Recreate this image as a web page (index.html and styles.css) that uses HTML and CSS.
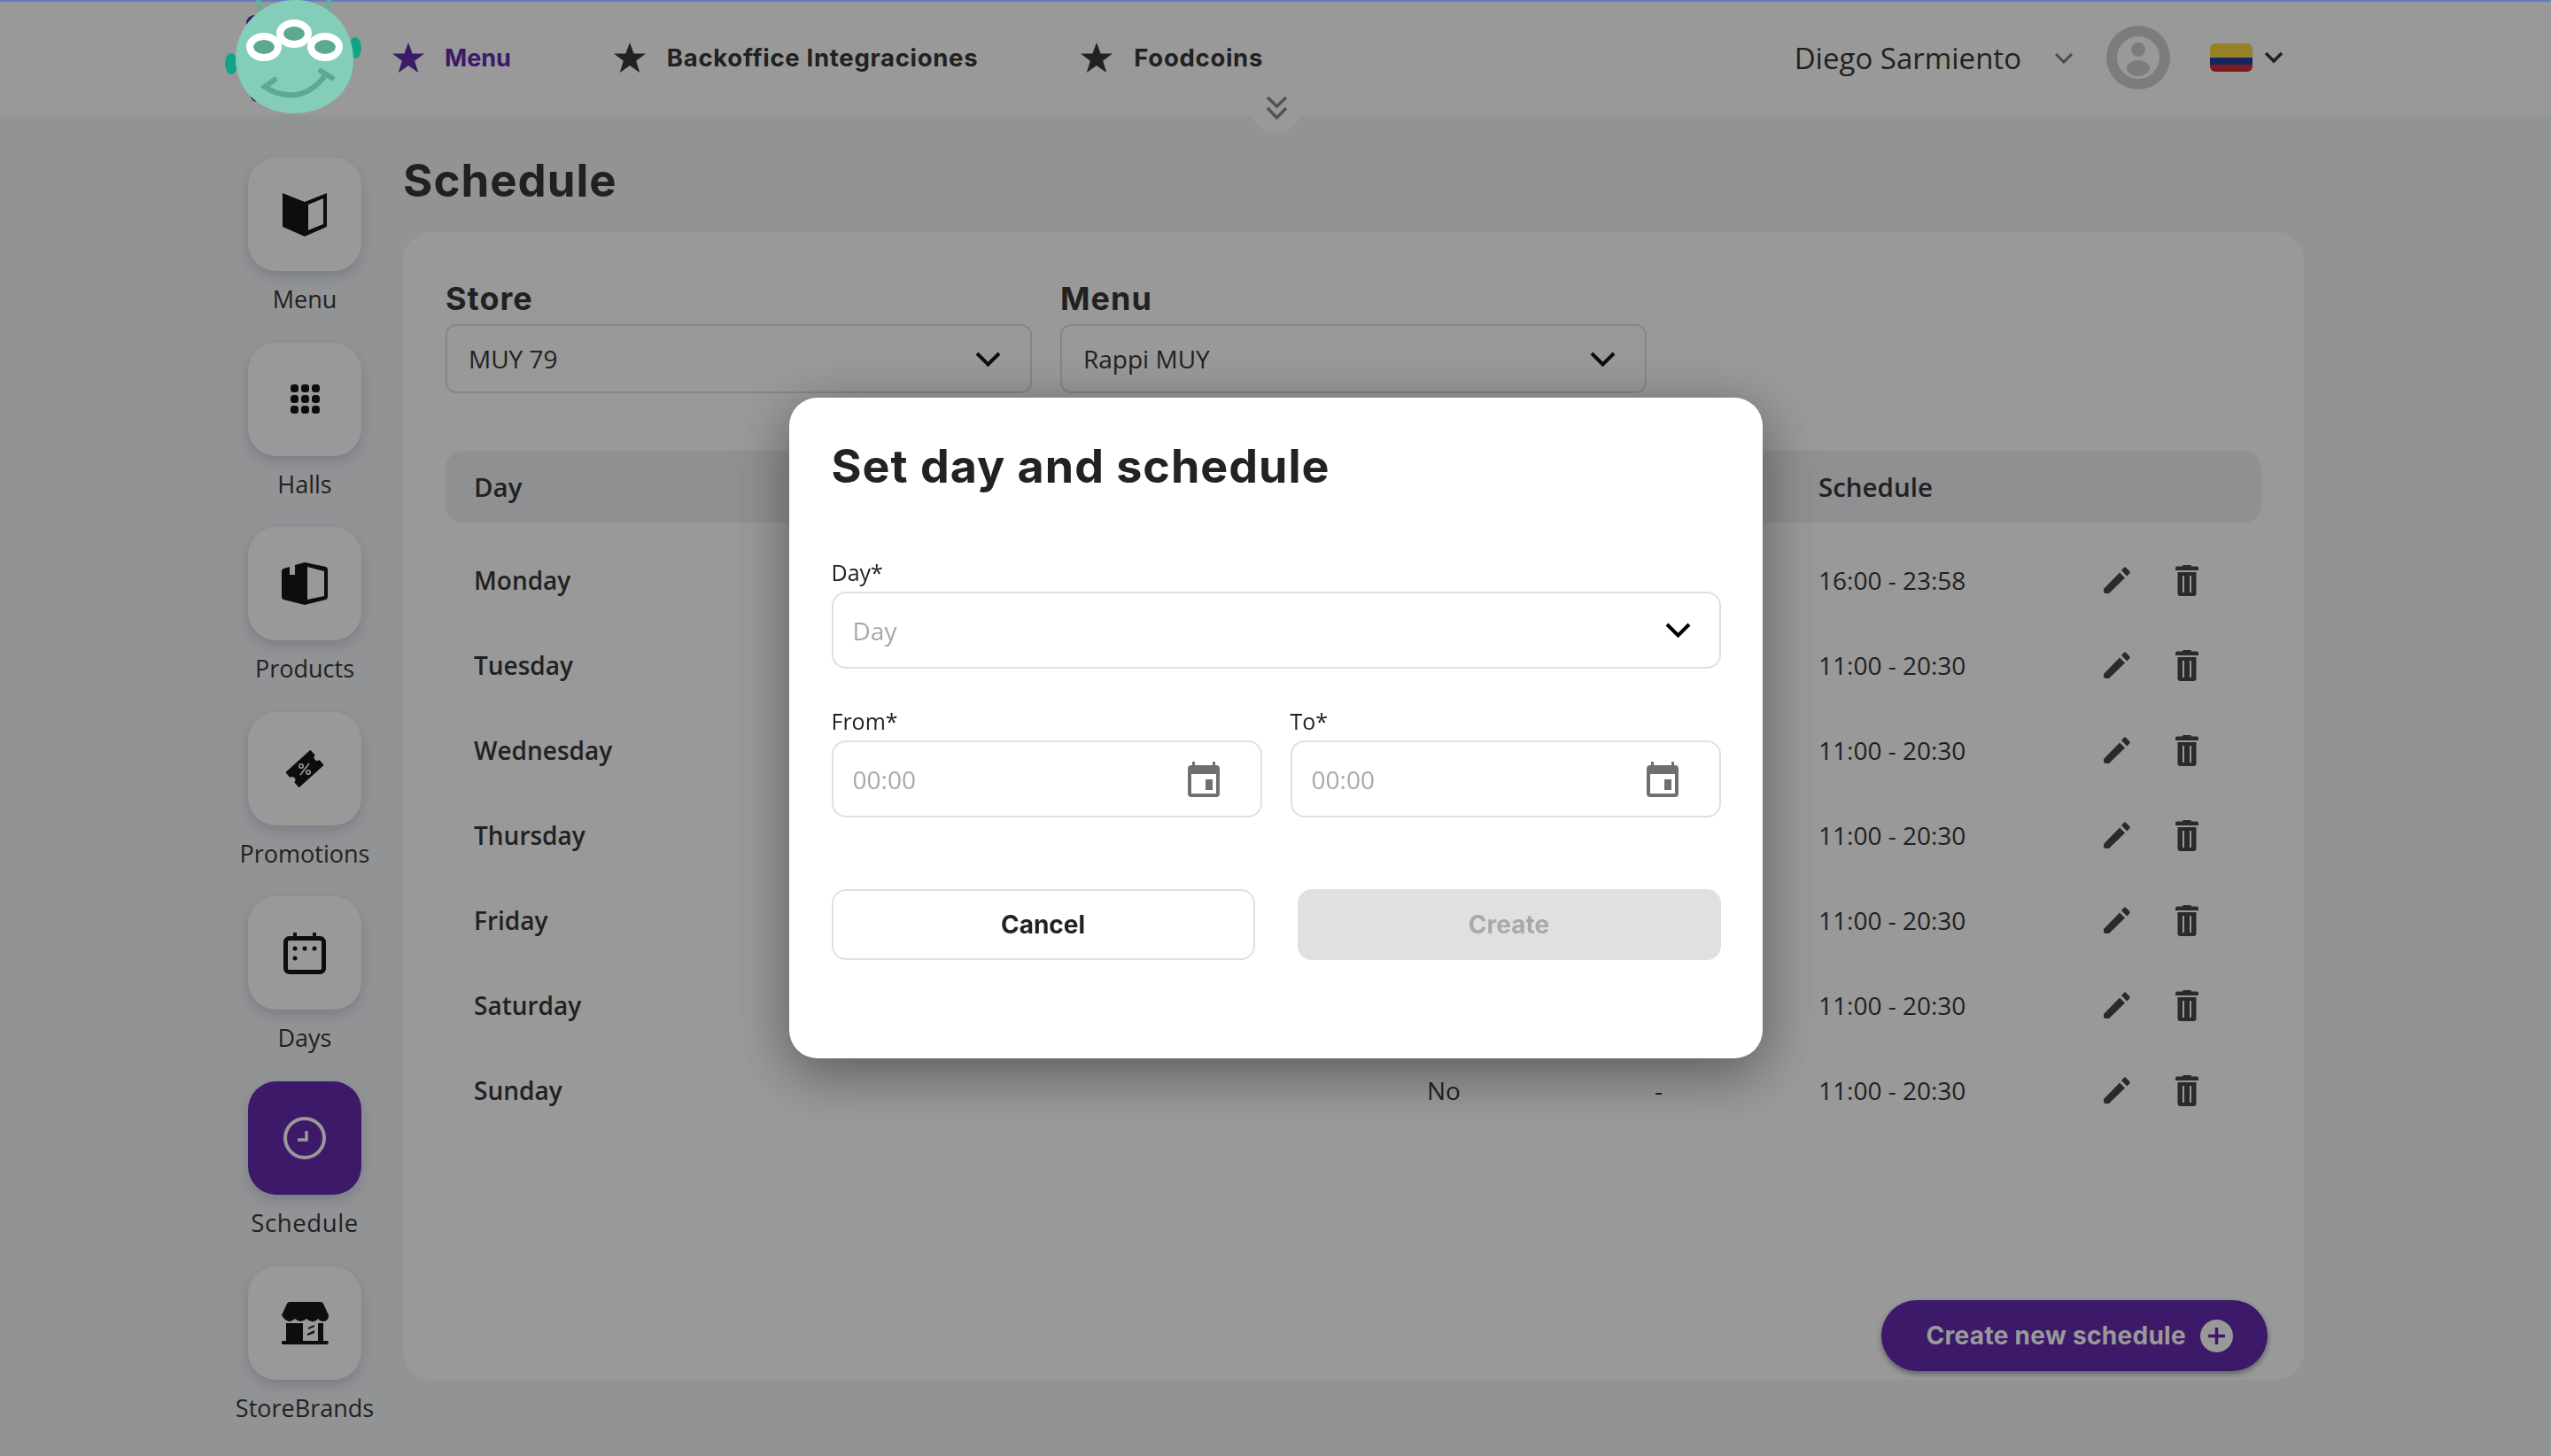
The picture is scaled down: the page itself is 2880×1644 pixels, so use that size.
FILE: index.html
```html
<!DOCTYPE html>
<html lang="en">
<head>
  <meta charset="UTF-8">
  <title>Schedule</title>
  <link rel="stylesheet" href="styles.css">
</head>
<body>

<svg class="icon-defs" width="0" height="0">
  <symbol id="i-star" viewBox="0 0 36 34"><path d="M18 0l4.600 12.600H36l-10.800 8.200L29.200 34 18 26 6.800 34l4-13.200L0 12.600h13.400z"/></symbol>
  <symbol id="i-pencil" viewBox="0 0 30 30"><path d="M0 25L18 6.500l6 6L6 30H2.500Q0 30 0 27.500zM20 4l3-3.300q1-.9 2 0l4.300 4.500q.9 1 0 2L26.300 10.500z"/></symbol>
  <symbol id="i-trash" viewBox="0 0 26 35"><path fill-rule="evenodd" d="M9 0h8q1 0 1 1.500h6q2 0 2 2V6H0V3.500q0-2 2-2h6Q8 0 9 0zM2.500 8h21v24q0 3-3 3h-15q-3 0-3-3zM8 12v19h2V12zm8 0v19h2V12z"/></symbol>
  <symbol id="i-event" viewBox="0 0 36 40"><path fill-rule="evenodd" d="M5 0h3v4h20V0h3v4h1q4 0 4 4v28q0 4-4 4H4q-4 0-4-4V8q0-4 4-4h1zM4 14v22h28V14zm16 6h8v12h-8z"/></symbol>
</svg>

<div class="top-line"></div>

<!-- logo stays above the dark overlay -->
<svg class="logo" viewBox="0 0 162 135" width="162" height="135">
  <path d="M41 0l5 14M122 0l-4 13" stroke="#5fb39a" stroke-width="5" fill="none"/>
  <circle cx="37" cy="26" r="9" fill="#3d1769"/>
  <circle cx="40" cy="108" r="7" fill="#3d1769"/>
  <ellipse cx="11" cy="72" rx="7" ry="12" fill="#13a487"/>
  <ellipse cx="151" cy="54" rx="7" ry="12" fill="#13a487"/>
  <path d="M83 0c38 0 66 30 66 68 0 34-28 60-67 60-38 0-66-26-66-62C16 30 45 0 83 0z" fill="#84cdb8"/>
  <g fill="#5da892" stroke="#fff" stroke-width="8">
    <ellipse cx="48" cy="53" rx="16" ry="12"/>
    <ellipse cx="82" cy="38" rx="16" ry="12"/>
    <ellipse cx="117" cy="53" rx="16" ry="12"/>
  </g>
  <path d="M60 90L49 98C62 107 74 108 84 107C98 105 110 95 118 84M112 80L125 88" stroke="#5da892" stroke-width="6" stroke-linecap="round" fill="none"/>
</svg>

<header class="topbar">
  <nav class="topnav">
    <a class="topnav-item active"><svg class="star"><use href="#i-star"/></svg>Menu</a>
    <a class="topnav-item"><svg class="star"><use href="#i-star"/></svg>Backoffice Integraciones</a>
    <a class="topnav-item"><svg class="star"><use href="#i-star"/></svg>Foodcoins</a>
  </nav>
  <div class="user-area">
    <span class="user-name">Diego Sarmiento</span>
    <svg class="user-chevron" viewBox="0 0 22 13" width="22" height="13"><path d="M2 2l9 9 9-9" fill="none" stroke-width="3"/></svg>
    <svg class="avatar" viewBox="0 0 72 72" width="72" height="72">
      <circle cx="36" cy="36" r="36" fill="#cfcfcf"/>
      <circle cx="36" cy="36" r="24" fill="#fff"/>
      <circle cx="36" cy="27" r="8" fill="#cfcfcf"/>
      <ellipse cx="36" cy="48" rx="13" ry="9" fill="#cfcfcf"/>
    </svg>
    <div class="flag"><span class="flag-y"></span><span class="flag-b"></span><span class="flag-r"></span></div>
    <svg class="flag-chevron" viewBox="0 0 22 14" width="22" height="14"><path d="M2 2l9 9 9-9" fill="none" stroke-width="3.500"/></svg>
  </div>
  <div class="collapse-tab">
    <svg viewBox="0 0 25 26" width="25" height="26"><path d="M2 1l10.500 10L23 1M2 13l10.500 11L23 13" fill="none" stroke="#8a8a8a" stroke-width="3.500"/></svg>
  </div>
</header>

<div id="page-container">
  <aside class="sidebar">
    <div class="side-item">
      <div class="side-tile">
        <svg viewBox="0 0 50 49" width="50" height="49"><path fill-rule="evenodd" d="M0 0l25 10v39L0 38zM25 10L50 0v38L25 49zM29 13v29l17-7V6z"/></svg>
      </div>
      <span>Menu</span>
    </div>
    <div class="side-item">
      <div class="side-tile">
        <svg viewBox="0 0 33 33" width="33" height="33">
          <rect width="9" height="9" rx="3.500"/><rect x="12" width="9" height="9" rx="3.500"/><rect x="24" width="9" height="9" rx="3.500"/>
          <rect y="12" width="9" height="9" rx="3.500"/><rect x="12" y="12" width="9" height="9" rx="3.500"/><rect x="24" y="12" width="9" height="9" rx="3.500"/>
          <rect y="24" width="9" height="9" rx="3.500"/><rect x="12" y="24" width="9" height="9" rx="3.500"/><rect x="24" y="24" width="9" height="9" rx="3.500"/>
        </svg>
      </div>
      <span>Halls</span>
    </div>
    <div class="side-item">
      <div class="side-tile">
        <svg viewBox="0 0 52 48" width="52" height="48"><path fill-rule="evenodd" d="M2 7l7-2v9h6V3L26 0l24 5q2 1 2 3v31q0 2-2 3l-24 6-24-6q-2-1-2-3V10q0-2 2-3zM29 5v37l19-4V10z"/></svg>
      </div>
      <span>Products</span>
    </div>
    <div class="side-item">
      <div class="side-tile">
        <svg viewBox="-21 -21 42 42" width="42" height="42">
          <path transform="rotate(-42)" d="M-19-11.500H19V-3.500A3.500 3.500 0 0 0 19 3.500V11.500H-19V3.500A3.500 3.500 0 0 0-19-3.500Z"/>
          <g fill="none" stroke="#fff" stroke-width="1.600">
            <circle cx="-4" cy="-3" r="2.200"/><circle cx="4" cy="4" r="2.200"/><path d="M5-6L-5 7"/>
          </g>
        </svg>
      </div>
      <span>Promotions</span>
    </div>
    <div class="side-item">
      <div class="side-tile">
        <svg viewBox="0 0 48 47" width="48" height="47">
          <rect x="2.500" y="6.500" width="43" height="38" rx="4" fill="none" stroke="#171717" stroke-width="5"/>
          <path d="M11 0h4v8h-4zM33 0h4v8h-4z"/>
          <circle cx="13" cy="18" r="2.500"/><circle cx="24" cy="18" r="2.500"/><circle cx="35" cy="18" r="2.500"/><circle cx="13" cy="29" r="2.500"/>
        </svg>
      </div>
      <span>Days</span>
    </div>
    <div class="side-item selected">
      <div class="side-tile">
        <svg viewBox="0 0 48 48" width="48" height="48">
          <circle cx="24" cy="24" r="22" fill="none" stroke="#fff" stroke-width="4"/>
          <path d="M26 16v10H16" fill="none" stroke="#fff" stroke-width="3.500"/>
        </svg>
      </div>
      <span>Schedule</span>
    </div>
    <div class="side-item">
      <div class="side-tile">
        <svg viewBox="0 0 53 48" width="53" height="48">
          <path d="M9 0h35q2 0 3 2l6 13q0 7-6 7-4 0-6-3-3 4-7 3-3 0-6-3-3 3-7 3-3 0-6-3-3 3-6 3-5 0-9-7L6 2q1-2 3-2z"/>
          <path d="M5 24h19v20H5zM41 24h6v20h-6z"/>
          <path d="M0 45q0-1 2-1h49q2 0 2 1.500T51 48H2q-2 0-2-1.500z"/>
          <path d="M30 29l7-3v2l-7 3zM29 36l8-4v3l-8 3z"/>
        </svg>
      </div>
      <span>StoreBrands</span>
    </div>
  </aside>

  <main class="content">
    <h1 class="page-title">Schedule</h1>
    <section class="panel">
      <div class="filters">
        <div class="filter">
          <label>Store</label>
          <div class="filter-select">MUY 79
            <svg viewBox="0 0 29 17" width="29" height="17"><path d="M2 2l12.500 12.500L27 2" fill="none" stroke-width="4"/></svg>
          </div>
        </div>
        <div class="filter">
          <label>Menu</label>
          <div class="filter-select">Rappi MUY
            <svg viewBox="0 0 29 17" width="29" height="17"><path d="M2 2l12.500 12.500L27 2" fill="none" stroke-width="4"/></svg>
          </div>
        </div>
      </div>

      <div class="table-head row-grid">
        <div>Day</div><div></div><div></div><div>Schedule</div>
      </div>

      <div class="table-row row-grid">
        <div class="day">Monday</div><div></div><div></div><div>16:00 - 23:58</div>
        <svg class="act"><use href="#i-pencil"/></svg><svg class="act-trash"><use href="#i-trash"/></svg>
      </div>
      <div class="table-row row-grid">
        <div class="day">Tuesday</div><div></div><div></div><div>11:00 - 20:30</div>
        <svg class="act"><use href="#i-pencil"/></svg><svg class="act-trash"><use href="#i-trash"/></svg>
      </div>
      <div class="table-row row-grid">
        <div class="day">Wednesday</div><div></div><div></div><div>11:00 - 20:30</div>
        <svg class="act"><use href="#i-pencil"/></svg><svg class="act-trash"><use href="#i-trash"/></svg>
      </div>
      <div class="table-row row-grid">
        <div class="day">Thursday</div><div></div><div></div><div>11:00 - 20:30</div>
        <svg class="act"><use href="#i-pencil"/></svg><svg class="act-trash"><use href="#i-trash"/></svg>
      </div>
      <div class="table-row row-grid">
        <div class="day">Friday</div><div></div><div></div><div>11:00 - 20:30</div>
        <svg class="act"><use href="#i-pencil"/></svg><svg class="act-trash"><use href="#i-trash"/></svg>
      </div>
      <div class="table-row row-grid">
        <div class="day">Saturday</div><div></div><div></div><div>11:00 - 20:30</div>
        <svg class="act"><use href="#i-pencil"/></svg><svg class="act-trash"><use href="#i-trash"/></svg>
      </div>
      <div class="table-row row-grid">
        <div class="day">Sunday</div><div>No</div><div>-</div><div>11:00 - 20:30</div>
        <svg class="act"><use href="#i-pencil"/></svg><svg class="act-trash"><use href="#i-trash"/></svg>
      </div>

      <button class="create-btn">Create new schedule
        <svg viewBox="0 0 37 37" width="37" height="37"><circle cx="18.500" cy="18.500" r="18.500" fill="#fff"/><path d="M18.500 9v19M9 18.500h19" stroke="#652ab0" stroke-width="3.500"/></svg>
      </button>
    </section>
  </main>
</div>

<div class="overlay">
  <div class="modal">
    <h2 class="modal-title">Set day and schedule</h2>

    <div class="field field-day">
      <label>Day*</label>
      <div class="input">Day
        <svg class="input-chevron" viewBox="0 0 29 17" width="29" height="17"><path d="M2 2l12.500 12.500L27 2" fill="none" stroke="#000" stroke-width="4"/></svg>
      </div>
    </div>

    <div class="field-pair">
      <div class="field">
        <label>From*</label>
        <div class="input">00:00 <svg class="input-event"><use href="#i-event"/></svg></div>
      </div>
      <div class="field">
        <label>To*</label>
        <div class="input">00:00 <svg class="input-event"><use href="#i-event"/></svg></div>
      </div>
    </div>

    <div class="modal-actions">
      <button class="btn btn-cancel">Cancel</button>
      <button class="btn btn-create">Create</button>
    </div>
  </div>
</div>

</body>
</html>
```

FILE: styles.css
```css
body {
  margin: 0;
  width: 2880px;
  height: 1644px;
  overflow: hidden;
  background-color: #f3f5f8;
  font-family: "Open Sans", "Noto Sans", sans-serif;
  color: #383838;
}

.icon-defs {
  position: absolute;
}

.top-line {
  position: absolute;
  top: 0;
  left: 0;
  right: 0;
  height: 2px;
  background-color: #5f7fbf;
  z-index: 20;
}

.logo {
  position: absolute;
  top: 0;
  left: 250px;
  z-index: 20;
}

/* Top bar */
.topbar {
  position: relative;
  display: flex;
  align-items: center;
  justify-content: space-between;
  height: 130px;
  padding: 0 302px 0 443px;
  box-sizing: border-box;
  background-color: #fff;
}

.topnav {
  display: flex;
  gap: 116px;
}

.topnav-item {
  display: flex;
  align-items: center;
  gap: 24px;
  font-family: Inter, sans-serif;
  font-weight: 700;
  font-size: 27.5px;
  letter-spacing: 0.7px;
  color: #383838;
}

.topnav-item.active {
  gap: 23px;
  font-size: 27px;
  letter-spacing: 0;
  color: #652ab0;
}

.star {
  width: 36px;
  height: 34px;
  fill: currentColor;
}

.user-area {
  display: flex;
  align-items: center;
}

.user-name {
  font-size: 33px;
  font-weight: 500;
  margin-right: 37px;
}

.user-chevron {
  stroke: #7d7d7d;
  margin-right: 37px;
}

.avatar {
  margin-right: 45px;
}

.flag {
  display: flex;
  flex-direction: column;
  width: 48px;
  height: 32px;
  border-radius: 6px;
  overflow: hidden;
  margin-right: 13px;
}

.flag-y {
  flex: 2;
  background-color: #fcd945;
}

.flag-b {
  flex: 1;
  background-color: #22449e;
}

.flag-r {
  flex: 1;
  background-color: #d52a33;
}

.flag-chevron {
  stroke: #383838;
}

.collapse-tab {
  position: absolute;
  left: 1412px;
  top: 100px;
  width: 58px;
  height: 50px;
  display: flex;
  justify-content: center;
  padding-top: 9px;
  box-sizing: border-box;
  background-color: #fff;
  border-radius: 0 0 29px 29px;
}

/* Layout */
#page-container {
  display: flex;
  padding-left: 246px;
  gap: 13px;
}

.sidebar {
  display: flex;
  flex-direction: column;
  width: 196px;
  padding-top: 48px;
}

.side-item {
  display: flex;
  flex-direction: column;
  align-items: center;
  height: 208.6px;
  font-size: 27px;
  color: #383838;
}

.side-item span {
  margin-top: 12px;
  line-height: 40px;
}

.side-item.selected span {
  font-size: 27.5px;
  letter-spacing: 0.6px;
}

.side-tile {
  display: flex;
  align-items: center;
  justify-content: center;
  width: 128px;
  height: 128px;
  border-radius: 32px;
  background-color: #fff;
  box-shadow: 0 6px 14px rgba(120, 130, 160, 0.3);
  fill: #171717;
}

.side-item.selected .side-tile {
  background-color: #652ab0;
}

.content {
  width: 2146px;
}

.page-title {
  margin: 48px 0 32px;
  font-family: Inter, sans-serif;
  font-weight: 700;
  font-size: 51px;
  letter-spacing: 1px;
  line-height: 52px;
}

.panel {
  display: flex;
  flex-direction: column;
  height: 1296px;
  box-sizing: border-box;
  padding: 56px 48px 10px;
  background-color: #fff;
  border-radius: 32px;
}

.filters {
  display: flex;
  gap: 32px;
}

.filter {
  width: 662px;
}

.filter label {
  display: block;
  font-family: Inter, sans-serif;
  font-weight: 700;
  font-size: 36px;
  letter-spacing: 1px;
  line-height: 38px;
  margin-bottom: 10px;
}

.filter-select {
  display: flex;
  align-items: center;
  justify-content: space-between;
  height: 78px;
  box-sizing: border-box;
  padding: 0 33px 0 24px;
  border: 2px solid #e0e0e0;
  border-radius: 12px;
  font-size: 28px;
}

.filter-select svg {
  stroke: #171717;
}

.row-grid {
  display: grid;
  grid-template-columns: 1076px 257px 185px 322px 81px 30px;
  padding-left: 32px;
  align-items: center;
}

.table-head {
  height: 81px;
  margin-top: 65px;
  margin-bottom: 17px;
  border-radius: 20px;
  background-color: #eef0f3;
  font-size: 29.5px;
  font-weight: 600;
}

.table-row {
  height: 96px;
  font-size: 28px;
  font-weight: 500;
}

.day {
  font-weight: 600;
}

.act {
  width: 30px;
  height: 30px;
  fill: #464646;
}

.act-trash {
  width: 26px;
  height: 35px;
  fill: #464646;
}

.create-btn {
  display: flex;
  align-items: center;
  gap: 16px;
  align-self: flex-end;
  margin-top: auto;
  margin-right: -7px;
  height: 80px;
  padding: 0 39px 0 51px;
  border: none;
  border-radius: 40px;
  background-color: #652ab0;
  color: #fff;
  font-family: Inter, sans-serif;
  font-weight: 700;
  font-size: 28px;
  letter-spacing: 0.3px;
  box-shadow: 0 3px 6px rgba(0, 0, 0, 0.4);
}

/* Modal */
.overlay {
  position: fixed;
  inset: 0;
  z-index: 10;
  display: flex;
  align-items: center;
  justify-content: center;
  background-color: rgba(0, 0, 0, 0.4);
}

.modal {
  width: 1099px;
  height: 746px;
  box-sizing: border-box;
  padding: 50px 47px 0 48px;
  background-color: #fff;
  border-radius: 32px;
  box-shadow: 0 16px 64px rgba(0, 0, 0, 0.42);
}

.modal-title {
  margin: 0;
  font-family: Inter, sans-serif;
  font-weight: 700;
  font-size: 52px;
  letter-spacing: 1px;
  line-height: 56px;
  color: #222;
}

.field label {
  display: block;
  font-size: 25px;
  line-height: 35px;
  margin-bottom: 4px;
  color: #222;
}

.field-day {
  margin-top: 74px;
}

.field-pair {
  display: grid;
  grid-template-columns: 486px 486px;
  gap: 32px;
  margin-top: 42px;
}

.input {
  position: relative;
  display: flex;
  align-items: center;
  justify-content: space-between;
  height: 87px;
  box-sizing: border-box;
  padding: 0 22px;
  border: 2px solid #e0e0e0;
  border-radius: 16px;
  font-size: 28px;
  color: #a9a9a9;
}

.input-event {
  width: 36px;
  height: 40px;
  fill: #6f6f6f;
  margin-right: 24px;
}

.input-chevron {
  margin-right: 10px;
}

.modal-actions {
  display: flex;
  justify-content: space-between;
  margin-top: 81px;
}

.btn {
  width: 478px;
  height: 80px;
  box-sizing: border-box;
  border-radius: 16px;
  font-family: Inter, sans-serif;
  font-weight: 700;
  font-size: 28px;
}

.btn-cancel {
  border: 2px solid #e0e0e0;
  background-color: #fff;
  color: #222;
}

.btn-create {
  border: none;
  background-color: #e0e0e0;
  color: #a9a9a9;
}
```
